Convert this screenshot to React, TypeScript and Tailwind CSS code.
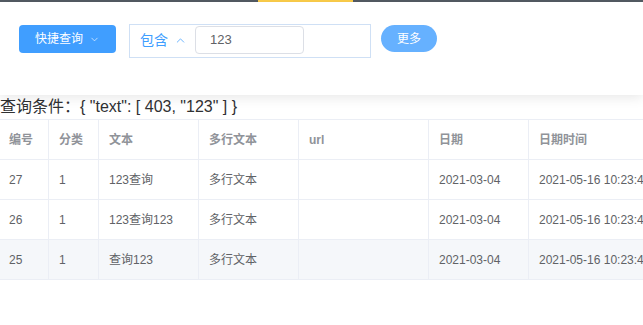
import React from 'react';
import { ChevronDown, ChevronUp } from 'lucide-react';

interface Row {
  id: number;
  category: number;
  text: string;
  multi: string;
  url: string;
  date: string;
  datetime: string;
}

const rows: Row[] = [
  { id: 27, category: 1, text: '123查询', multi: '多行文本', url: '', date: '2021-03-04', datetime: '2021-05-16 10:23:45' },
  { id: 26, category: 1, text: '123查询123', multi: '多行文本', url: '', date: '2021-03-04', datetime: '2021-05-16 10:23:45' },
  { id: 25, category: 1, text: '查询123', multi: '多行文本', url: '', date: '2021-03-04', datetime: '2021-05-16 10:23:45' },
];

const cols = [
  { key: 'id', label: '编号', cls: 'w-[49px] pl-[9px]' },
  { key: 'category', label: '分类', cls: 'w-[50px] pl-[10px]' },
  { key: 'text', label: '文本', cls: 'w-[100px] pl-[10px]' },
  { key: 'multi', label: '多行文本', cls: 'w-[100px] pl-[10px]' },
  { key: 'url', label: 'url', cls: 'w-[130px] pl-[10px]' },
  { key: 'date', label: '日期', cls: 'w-[100px] pl-[10px]' },
  { key: 'datetime', label: '日期时间', cls: 'w-[160px] pl-[10px]' },
] as const;

export default function App() {
  return (
    <div
      className="w-[643px] h-[325px] overflow-hidden bg-white"
      style={{ fontFamily: '"Liberation Sans", "Noto Sans CJK SC", sans-serif' }}
    >
      {/* top menu edge */}
      <div className="h-[2px] bg-[#545c64] flex">
        <div className="w-[258px]" />
        <div className="w-[95px] bg-[#ffd04b]" />
      </div>

      {/* search panel */}
      <div className="relative z-10 h-[93px] bg-white shadow-[0_2px_12px_0_rgba(0,0,0,0.1)] pl-[19px] pt-[22px] flex items-start">
        <button className="mt-[1px] h-[28px] w-[97px] rounded-[4px] bg-[#409eff] text-white text-[12px] flex items-center pl-[16px] gap-[6px]">
          快捷查询
          <ChevronDown className="w-[11px] h-[11px]" strokeWidth={1.4} />
        </button>

        <div className="ml-[13px] h-[34px] w-[242px] border border-[#cfe0f5] flex items-start pt-[1px] pl-[10px]">
          <div className="h-[28px] flex items-center text-[14px] text-[#409eff]">
            包含
            <ChevronUp className="ml-[6px] w-[13px] h-[13px]" strokeWidth={1.4} />
          </div>
          <div className="ml-[8px] h-[28px] w-[109px] rounded-[4px] border border-[#dcdfe6] flex items-center pl-[14px] text-[13px] text-[#606266]">
            123
          </div>
        </div>

        <button className="ml-[10px] mt-[1px] h-[27px] w-[56px] rounded-full bg-[#66b1ff] text-white text-[12px] flex items-center justify-center">
          更多
        </button>
      </div>

      {/* condition */}
      <div className="h-[24px] leading-[24px] text-[16px] text-[#303133] whitespace-nowrap">
        查询条件：{'{ "text": [ 403, "123" ] }'}
      </div>

      {/* table */}
      <div className="w-[720px] text-[12px]">
        <div className="flex h-[41px] border-y border-[#ebeef5] text-[#909399] font-bold">
          {cols.map((c) => (
            <div key={c.key} className={`${c.cls} shrink-0 border-r border-[#ebeef5] flex items-center`}>
              {c.label}
            </div>
          ))}
        </div>
        {rows.map((r, i) => (
          <div
            key={r.id}
            className={`flex h-[40px] border-b border-[#ebeef5] text-[#606266] ${i === 2 ? 'bg-[#f5f7fa]' : 'bg-white'}`}
          >
            {cols.map((c) => (
              <div key={c.key} className={`${c.cls} shrink-0 border-r border-[#ebeef5] flex items-center whitespace-nowrap`}>
                {String(r[c.key])}
              </div>
            ))}
          </div>
        ))}
      </div>
    </div>
  );
}
